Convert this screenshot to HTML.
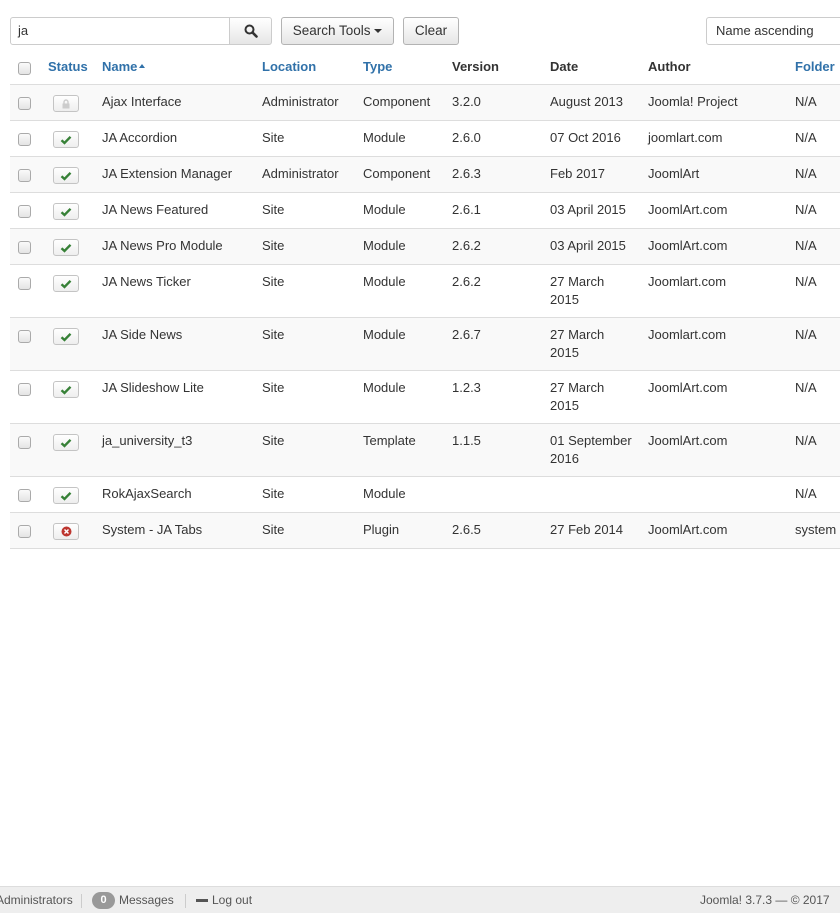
<!DOCTYPE html>
<html><head><meta charset="utf-8"><style>
*{box-sizing:border-box;margin:0;padding:0}
body{width:840px;height:913px;overflow:hidden;background:#fff;font-family:"Liberation Sans",Arial,sans-serif;font-size:13px;color:#333;position:relative}
.abs{position:absolute}
.inp{left:10px;top:17px;width:220px;height:28px;border:1px solid #ccc;border-radius:3px 0 0 3px;padding:6px 7px;line-height:14px;font-size:13px}
.btn{top:17px;height:28px;border:1px solid #b3b3b3;border-radius:3px;background:linear-gradient(#fff,#e6e6e6);text-align:center;line-height:26px;font-size:13.5px;color:#333}
.sel{left:706px;top:17px;width:150px;height:28px;border:1px solid #ccc;border-radius:3px;padding:0 9px;line-height:26px;font-size:13px}
.row{position:absolute;left:10px;width:840px;border-top:1px solid #ddd}
.row.g{background:#f9f9f9}
.c{position:absolute;top:8px;line-height:18px}
.cb{position:absolute;left:8px;width:13px;height:13px;border:1px solid #aaa;border-radius:3px;background:linear-gradient(#fafafa,#e4e4e4)}
.st{position:absolute;left:43px;width:26px;height:17px;border:1px solid #c4c4c4;border-radius:3px;background:linear-gradient(#fff,#eee)}
.h{font-weight:bold;color:#3071a9}
.hd{font-weight:bold;color:#333}
.hr .c{top:10px}
.foot{left:0;top:886px;width:840px;height:27px;background:#eee;border-top:1px solid #ddd;font-size:12px;color:#555;line-height:27px}
</style></head><body>
<div class="abs inp">ja</div>
<div class="abs btn" style="left:229px;width:43px;border-radius:0 3px 3px 0;border-color:#ccc">
<svg width="14" height="14" viewBox="0 0 14 14" style="margin-top:6px"><circle cx="5.5" cy="5.5" r="4" fill="none" stroke="#333" stroke-width="2"/><path d="M8.5 8.5L12.5 12.5" stroke="#333" stroke-width="2.6" stroke-linecap="round"/></svg></div>
<div class="abs btn" style="left:281px;width:113px">Search Tools <span style="display:inline-block;border-left:4px solid transparent;border-right:4px solid transparent;border-top:4px solid #333;vertical-align:middle"></span></div>
<div class="abs btn" style="left:403px;width:56px">Clear</div>
<div class="abs sel">Name ascending</div>

<div class="row hr" style="top:48px;height:36px;border-top:none">
<div class="cb" style="top:14px"></div>
<div class="c h" style="left:38px">Status</div>
<div class="c h" style="left:92px">Name <span style="display:inline-block;border-left:3.5px solid transparent;border-right:3.5px solid transparent;border-bottom:4px solid #3071a9;vertical-align:3px;margin-left:-2px"></span></div>
<div class="c h" style="left:252px">Location</div>
<div class="c h" style="left:353px">Type</div>
<div class="c hd" style="left:442px">Version</div>
<div class="c hd" style="left:540px">Date</div>
<div class="c hd" style="left:638px">Author</div>
<div class="c h" style="left:785px">Folder</div>
</div>

<div id="rows"></div>
<script>
var d=[
["Ajax Interface","Administrator","Component","3.2.0","August 2013","Joomla! Project","N/A",36,"lock"],
["JA Accordion","Site","Module","2.6.0","07 Oct 2016","joomlart.com","N/A",36,"ok"],
["JA Extension Manager","Administrator","Component","2.6.3","Feb 2017","JoomlArt","N/A",36,"ok"],
["JA News Featured","Site","Module","2.6.1","03 April 2015","JoomlArt.com","N/A",36,"ok"],
["JA News Pro Module","Site","Module","2.6.2","03 April 2015","JoomlArt.com","N/A",36,"ok"],
["JA News Ticker","Site","Module","2.6.2","27 March<br>2015","Joomlart.com","N/A",53,"ok"],
["JA Side News","Site","Module","2.6.7","27 March<br>2015","Joomlart.com","N/A",53,"ok"],
["JA Slideshow Lite","Site","Module","1.2.3","27 March<br>2015","JoomlArt.com","N/A",53,"ok"],
["ja_university_t3","Site","Template","1.1.5","01 September<br>2016","JoomlArt.com","N/A",53,"ok"],
["RokAjaxSearch","Site","Module","","","","N/A",36,"ok"],
["System - JA Tabs","Site","Plugin","2.6.5","27 Feb 2014","JoomlArt.com","system",36,"x"]];
var y=84,h="";
d.forEach(function(r,i){
var ic=r[8]=="ok"?'<svg width="12" height="10" viewBox="0 0 12 10" style="position:absolute;left:6px;top:3px"><path d="M1.5 5.2L4.5 8L10.5 1.8" fill="none" stroke="#378137" stroke-width="2.4"/></svg>':
r[8]=="x"?'<svg width="11" height="11" viewBox="0 0 11 11" style="position:absolute;left:7px;top:2px"><circle cx="5.5" cy="5.5" r="5" fill="#bd362f"/><path d="M3.5 3.5L7.5 7.5M7.5 3.5L3.5 7.5" stroke="#fff" stroke-width="1.5"/></svg>':
'<svg width="10" height="10" viewBox="0 0 10 10" style="position:absolute;left:7px;top:3px"><rect x="1.5" y="4.5" width="7" height="5" fill="#ccc"/><path d="M3 4.5V3a2 2 0 0 1 4 0v1.5" fill="none" stroke="#ccc" stroke-width="1.4"/></svg>';
h+='<div class="row'+(i%2==0?' g':'')+'" style="top:'+y+'px;height:'+r[7]+'px">'+
'<div class="cb" style="top:12px"></div><div class="st" style="top:10px">'+ic+'</div>'+
'<div class="c" style="left:92px">'+r[0]+'</div><div class="c" style="left:252px">'+r[1]+'</div>'+
'<div class="c" style="left:353px">'+r[2]+'</div><div class="c" style="left:442px">'+r[3]+'</div>'+
'<div class="c" style="left:540px">'+r[4]+'</div><div class="c" style="left:638px">'+r[5]+'</div>'+
'<div class="c" style="left:785px">'+r[6]+'</div></div>';
y+=r[7];});
h+='<div class="row" style="top:'+y+'px;height:1px"></div>';
document.getElementById("rows").innerHTML=h;
</script>

<div class="abs foot">
<span class="abs" style="left:-4px">Administrators</span>
<span class="abs" style="left:81px;top:7px;width:1px;height:14px;background:#ccc"></span>
<span class="abs" style="left:92px;top:5px;width:23px;height:17px;border-radius:9px;background:#999;color:#fff;font-weight:bold;font-size:11px;line-height:17px;text-align:center">0</span>
<span class="abs" style="left:119px">Messages</span>
<span class="abs" style="left:185px;top:7px;width:1px;height:14px;background:#ccc"></span>
<span class="abs" style="left:196px;top:12px;width:12px;height:3px;background:#555"></span>
<span class="abs" style="left:212px">Log out</span>
<span class="abs" style="left:700px">Joomla! 3.7.3 — © 2017</span>
</div>
</body></html>
